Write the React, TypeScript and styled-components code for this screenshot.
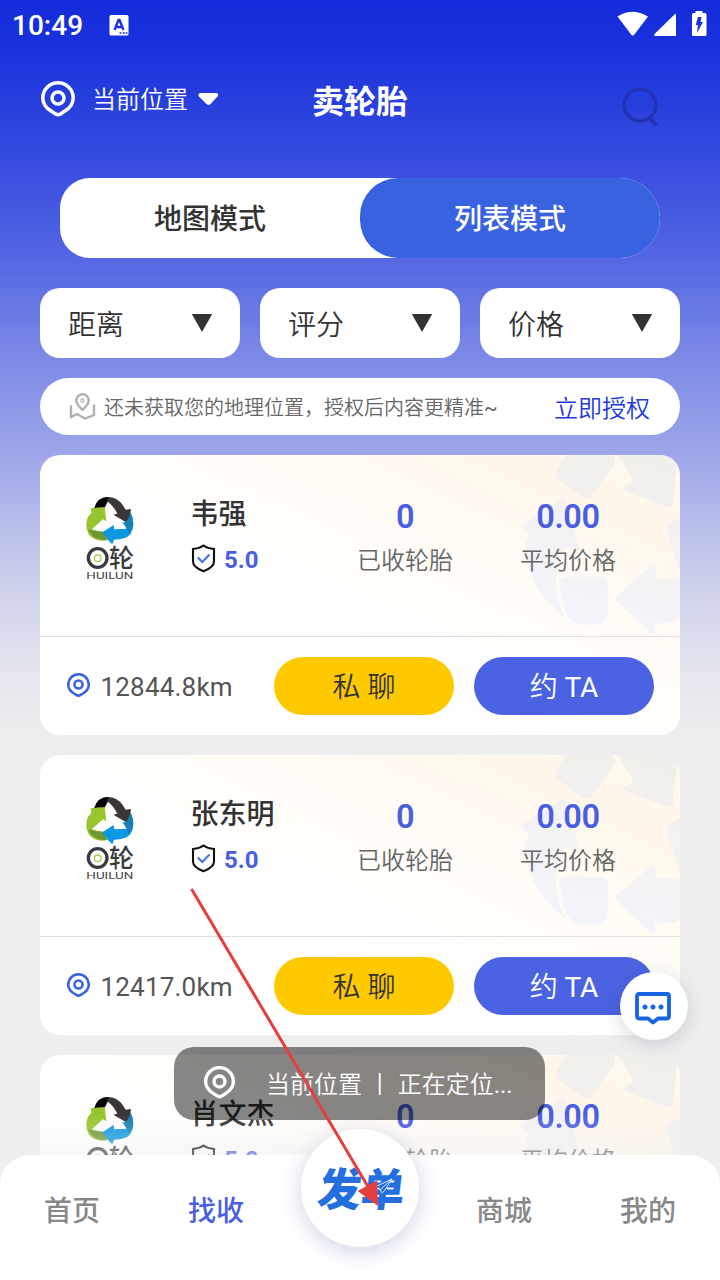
import React from "react";
import styled, { createGlobalStyle } from "styled-components";

const BLUE = "#495fe0";

const GlobalStyle = createGlobalStyle`
  * { box-sizing: border-box; }
  body {
    margin: 0;
    font-family: Roboto, "Noto Sans CJK SC", sans-serif;
    color: #333;
  }
`;

const Screen = styled.div`
  position: relative;
  width: 720px;
  height: 1280px;
  overflow: hidden;
  background: linear-gradient(
    180deg,
    #142bdb 0,
    #1a32dc 50px,
    #2c43de 120px,
    #384de0 165px,
    #5164e2 250px,
    #7584e5 340px,
    #a0a8e9 460px,
    #cfd2ec 590px,
    #e4e5ee 670px,
    #eee 740px
  );
`;

const Latin = styled.span`
  font-weight: 400;
`;

const StatusBar = styled.div`
  display: flex;
  align-items: center;
  height: 50px;
  padding: 0 13px 0 12px;
  color: #fff;
`;

const Clock = styled.span`
  width: 97px;
  padding-top: 1px;
  font-size: 28px;
  font-weight: 500;
  line-height: 50px;
`;

const StatusIcons = styled.div`
  display: flex;
  align-items: center;
  margin-left: auto;
`;

const Header = styled.header`
  display: grid;
  grid-template-columns: 1fr auto 1fr;
  align-items: center;
  height: 98px;
  padding: 0 41px;
  color: #fff;
`;

const Place = styled.div`
  display: flex;
  align-items: center;
  font-size: 24px;
  font-weight: 350;
  line-height: 36px;
  svg { flex: none; }
`;

const PlaceName = styled.span`
  margin: 1px 10px 0 17px;
`;

const Title = styled.h1`
  margin: 0;
  padding-top: 5px;
  font-size: 32px;
  font-weight: 700;
  line-height: 46px;
`;

const SearchButton = styled.div`
  justify-self: end;
  display: flex;
  padding-top: 14px;
  margin-right: 20px;
`;

const ModeTabs = styled.div`
  display: flex;
  height: 80px;
  margin: 30px 60px 0;
  border-radius: 30px 40px 40px 30px;
  background: #fff;
`;

const ModeTab = styled.div<{ $active?: boolean }>`
  flex: 1;
  padding-top: 2px;
  border-radius: 38px 40px 40px 38px;
  background: ${(p) => (p.$active ? "#3862e0" : "transparent")};
  color: ${(p) => (p.$active ? "#fff" : "#333")};
  font-size: 28px;
  font-weight: 500;
  line-height: 80px;
  text-align: center;
`;

const Filters = styled.div`
  display: flex;
  gap: 20px;
  margin: 30px 40px 20px;
`;

const Filter = styled.div`
  flex: 1;
  display: flex;
  align-items: center;
  justify-content: space-between;
  height: 70px;
  padding: 0 27px 0 28px;
  border-radius: 20px;
  background: #fff;
  font-size: 28px;
  font-weight: 350;
`;

const Notice = styled.div`
  display: flex;
  align-items: center;
  height: 57px;
  margin: 0 40px 20px;
  padding: 0 30px 0 29px;
  border-radius: 29px;
  background: #fff;
  font-weight: 350;
`;

const NoticeText = styled.span`
  margin: -1px 0 0 8px;
  font-size: 20px;
  color: #666;
`;

const NoticeLink = styled.a`
  margin-left: auto;
  font-size: 24px;
  color: #2339dc;
`;

const CardList = styled.div`
  display: flex;
  flex-direction: column;
  gap: 20px;
  padding: 0 40px;
`;

const Card = styled.article`
  position: relative;
  height: 280px;
  border-radius: 20px;
  overflow: hidden;
  background: linear-gradient(205deg, #fffaf2 0%, #fff6ea 14%, #fffaf3 28%, #fffdf9 42%, #fefefd 54%, #fff 64%);
`;

const Watermark = styled.svg`
  position: absolute;
  top: 0;
  right: 0;
`;

const CardTop = styled.div`
  position: relative;
  display: flex;
  height: 182px;
  padding-left: 46px;
  border-bottom: 1px solid #dfdfdf;
`;

const LogoBox = styled.div`
  width: 104.5px;
  padding-top: 41px;
`;

const Person = styled.div`
  width: 133px;
  padding-top: 40px;
`;

const Name = styled.div`
  font-size: 28px;
  font-weight: 500;
  line-height: 40px;
  white-space: nowrap;
`;

const Rating = styled.div`
  display: flex;
  align-items: center;
  gap: 8px;
  height: 30px;
  margin-top: 8px;
  padding-left: 0.5px;
  color: ${BLUE};
  font-size: 24px;
  font-weight: 700;
  span { padding-top: 3px; }
`;

const Stat = styled.div`
  width: 163px;
  padding-top: 43px;
  text-align: center;
`;

const StatValue = styled.div`
  color: ${BLUE};
  font-size: 32.5px;
  font-weight: 600;
  line-height: 38px;
  letter-spacing: -0.4px;
`;

const StatLabel = styled.div`
  margin-top: 7px;
  color: #666;
  font-size: 24px;
  font-weight: 350;
  line-height: 36px;
`;

const CardBottom = styled.div`
  position: relative;
  display: flex;
  align-items: center;
  gap: 20px;
  height: 98px;
  padding: 0 26px;
`;

const Distance = styled.div`
  flex: 1;
  display: flex;
  align-items: center;
  gap: 11px;
  padding: 1px 0 0 0.5px;
  color: #555;
  font-size: 26px;
  letter-spacing: 0.2px;
  svg { margin-top: -3px; }
`;

const ActionButton = styled.div<{ $primary?: boolean }>`
  width: 180px;
  height: 58px;
  padding-top: 2px;
  border-radius: 29px;
  background: ${(p) => (p.$primary ? "#4b63e2" : "#ffc900")};
  color: ${(p) => (p.$primary ? "#fff" : "#333")};
  font-size: 28px;
  font-weight: 350;
  line-height: 58px;
  text-align: center;
`;

const ChatBubble = styled.div`
  position: absolute;
  right: 32px;
  top: 972px;
  display: grid;
  place-items: center;
  width: 68px;
  height: 68px;
  padding: 3px 2px 0 0;
  border-radius: 50%;
  background: #fff;
  box-shadow: 0 4px 18px rgba(40, 50, 90, 0.18);
`;

const NavBar = styled.nav`
  position: absolute;
  left: 0;
  right: 0;
  bottom: 0;
  display: grid;
  grid-template-columns: repeat(5, 1fr);
  height: 125px;
  border-radius: 30px 30px 0 0;
  background: #fff;
`;

const NavFade = styled.div`
  position: absolute;
  left: 0;
  right: 0;
  bottom: 95px;
  height: 70px;
  background: linear-gradient(180deg, rgba(238, 238, 238, 0), rgba(238, 238, 238, 0.75));
`;

const NavItem = styled.div<{ $active?: boolean }>`
  padding-top: 36px;
  color: ${(p) => (p.$active ? BLUE : "#888")};
  font-size: 28px;
  font-weight: 500;
  line-height: 42px;
  text-align: center;
`;

const PostButton = styled.div`
  justify-self: center;
  width: 118px;
  height: 118px;
  margin-top: -26px;
  border-radius: 50%;
  background: #fff;
  box-shadow: 0 5px 22px rgba(60, 75, 150, 0.24);
`;

const Toast = styled.div`
  position: absolute;
  left: 174px;
  top: 1047px;
  display: flex;
  align-items: center;
  width: 371px;
  height: 73px;
  padding: 0 0 2px 30px;
  border-radius: 20px;
  background: rgba(0, 0, 0, 0.47);
  color: #fff;
  font-size: 24px;
  font-weight: 350;
  white-space: pre;
`;

const ToastText = styled.span`
  margin-left: 31px;
`;

const Pointer = styled.svg`
  position: absolute;
  left: 180px;
  top: 880px;
`;

function PinIcon({ width, color, stroke = 3.5 }: { width: number; color: string; stroke?: number }) {
  return (
    <svg width={width} height={(width * 36) / 34} viewBox="0 0 34 36" fill="none" stroke={color} strokeWidth={stroke}>
      <path
        strokeLinejoin="round"
        d="M17 33.7C15 33.7 13 31.8 10.4 30.3C5.4 27.3 1.8 23.2 1.8 17A15.2 15.2 0 0 1 32.2 17C32.2 23.2 28.6 27.3 23.6 30.3C21 31.8 19 33.7 17 33.7Z"
      />
      <circle cx="17" cy="17" r="6" />
    </svg>
  );
}

function CompanyLogo() {
  return (
    <svg width="48" height="84" viewBox="78 45 144 252">
      <path d="M103 81Q112 48 142 48Q170 47 188 72L197 86L213 84L206 128L160 101L172 98Q160 74 144 62L132 84Z" fill="#3b3535" />
      <path d="M103 81Q112 49 146 48L131 84L118 78Z" fill="#050505" />
      <path d="M92 82L134 78L139 121L129 115L96 144Q111 151 128 152L139 178Q103 183 86 160Q72 132 85 106L94 96Z" fill="#98c52d" />
      <path d="M84 145Q106 153 130 152L142 177Q100 181 84 145Z" fill="#6f9634" />
      <path d="M127 154L161 132L163 145L203 143Q198 131 184 124Q205 130 211 94Q230 131 211 160Q197 176 162 176L157 190L144 178Z" fill="#0c98e0" />
      <path d="M190 127Q207 122 212 94Q228 133 206 158Q202 146 190 127Z" fill="#197eb4" />
      <circle cx="113" cy="231" r="28" fill="none" stroke="#393c3e" strokeWidth="10" />
      <circle cx="113" cy="232" r="10" fill="none" stroke="#a8d04b" strokeWidth="4" />
      <text x="147" y="258" fontSize="75" fontWeight="500" fill="#393c3e">轮</text>
      <text x="79" y="293" fontSize="25" fill="#444" textLength="141" lengthAdjust="spacingAndGlyphs">HUILUN</text>
    </svg>
  );
}

function CardWatermark() {
  return (
    <Watermark width="220" height="280" viewBox="0 15 660 840" fill="url(#tyre-mark)">
      <defs>
        <linearGradient id="tyre-mark" gradientUnits="userSpaceOnUse" x1="500" y1="15" x2="350" y2="520">
          <stop offset="0" stopColor="#f1efeb" />
          <stop offset="0.5" stopColor="#f3f2f3" />
          <stop offset="1" stopColor="#f3f4fa" />
        </linearGradient>
      </defs>
      <path d="M320 15H455Q470 27 464 39L398 135Q386 151 370 145L300 93Q283 80 289 65Q300 38 320 15Z" />
      <path d="M473 15H640Q652 30 650 55L638 165Q636 176 624 171L496 124Q488 119 494 111L520 97Q513 75 473 15Z" />
      <path d="M303 149Q315 144 319 158L356 292Q359 305 349 301L318 291Q287 345 288 400Q290 460 318 507Q255 460 222 395Q195 340 196 300Q197 275 208 248L188 236Q180 229 188 223Z" />
      <path d="M315 380H425Q443 380 443 398V488Q440 524 402 524H370Q335 521 325 500Q300 450 300 395Q302 380 315 380Z" />
      <path d="M573 347Q587 340 587 353V387H660V507Q643 520 620 520H585V540Q583 555 573 550L468 450Q463 443 470 437Z" />
      <path d="M660 205L633 216Q616 225 622 250L660 370Z" />
    </Watermark>
  );
}

function Triangle() {
  return (
    <svg width="22" height="20" viewBox="0 0 22 20">
      <path d="M0.8 1H21.2L11 19Z" fill="#333" />
    </svg>
  );
}

const people = [
  { name: "韦强", distance: "12844.8km" },
  { name: "张东明", distance: "12417.0km" },
  { name: "肖文杰" },
];

function PersonCard({ name, distance }: { name: string; distance?: string }) {
  return (
    <Card>
      <CardWatermark />
      <CardTop>
        <LogoBox>
          <CompanyLogo />
        </LogoBox>
        <Person>
          <Name>{name}</Name>
          <Rating>
            <svg width="25" height="29" viewBox="0 0 25 29" fill="none" strokeWidth="2.1">
              <path d="M12.5 1.5Q16.5 4.6 23 5V17.5C23 22 18.5 25 12.5 27.3C6.5 25 2 22 2 17.5V5Q8.5 4.6 12.5 1.5Z" stroke="#111" />
              <path d="M6.8 13.5L11.3 18L18.5 10.5" stroke="#4275e8" />
            </svg>
            <span>5.0</span>
          </Rating>
        </Person>
        <Stat>
          <StatValue>0</StatValue>
          <StatLabel>已收轮胎</StatLabel>
        </Stat>
        <Stat>
          <StatValue>0.00</StatValue>
          <StatLabel>平均价格</StatLabel>
        </Stat>
      </CardTop>
      {distance && (
        <CardBottom>
          <Distance>
            <PinIcon width={23} color="#3862e0" stroke={3.8} />
            {distance}
          </Distance>
          <ActionButton>私 聊</ActionButton>
          <ActionButton $primary>
            约 <Latin>TA</Latin>
          </ActionButton>
        </CardBottom>
      )}
    </Card>
  );
}

export default function App() {
  return (
    <Screen>
      <GlobalStyle />
      <StatusBar>
        <Clock>10:49</Clock>
        <svg width="20" height="21" viewBox="0 0 19 21">
          <rect width="19" height="20.5" rx="1.5" fill="#fff" />
          <path d="M5 15L9 5H10L14 15M6.5 12H12.5" fill="none" stroke="#1930dc" strokeWidth="2.3" />
          <path d="M10 18H12M13.3 18H15.3M16.2 18H18" stroke="#1930dc" strokeWidth="1.5" />
        </svg>
        <StatusIcons>
          <svg width="90" height="28" viewBox="0 0 90 28" fill="#fff">
            <path d="M0.5 5.5Q15 -4 31 5.5L17 24Q15.8 25 14.5 24Z" />
            <path d="M59 3V25H38Q36.5 24.5 37.5 23L58 3Z" />
            <path d="M78.5 0H85.5V2H88Q89.5 2 89.5 4V24Q89.5 25 88 25H76.5Q75 25 75 24V4Q75 2 76.5 2H78.5Z" />
            <path d="M81 6H84.5L83.5 11H86L80 22L81 14H78.7Z" fill="#1930dc" />
          </svg>
        </StatusIcons>
      </StatusBar>
      <Header>
        <Place>
          <PinIcon width={34} color="#fff" />
          <PlaceName>当前位置</PlaceName>
          <svg width="21" height="14" viewBox="0 0 21 14">
            <path d="M2 1H19Q21 2.5 19.5 4.5L12.5 12Q10.5 13.8 8.5 12L1 4.5Q-0.5 2.5 2 1Z" fill="#fff" />
          </svg>
        </Place>
        <Title>卖轮胎</Title>
        <SearchButton>
          <svg width="37" height="39" viewBox="0 0 37 39" fill="none" stroke="#2232b4" strokeWidth="3.4">
            <circle cx="18" cy="18" r="16" />
            <path d="M29 32.5L33 36.5" strokeWidth="4.2" strokeLinecap="round" />
          </svg>
        </SearchButton>
      </Header>
      <ModeTabs>
        <ModeTab>地图模式</ModeTab>
        <ModeTab $active>列表模式</ModeTab>
      </ModeTabs>
      <Filters>
        {["距离", "评分", "价格"].map((label) => (
          <Filter key={label}>
            {label}
            <Triangle />
          </Filter>
        ))}
      </Filters>
      <Notice>
        <svg width="27" height="27" viewBox="0 0 27 27" fill="none" stroke="#b0b0b0" strokeWidth="2.4">
          <path d="M13.5 17C10 13.5 7.3 11 7.3 7.5A6.2 6.2 0 0 1 19.7 7.5C19.7 11 17 13.5 13.5 17Z" />
          <circle cx="13.5" cy="7.5" r="1.6" strokeWidth="1.2" />
          <path d="M2 12.5V24L8 21L16 25.5L25 22V11.5M2 20" />
        </svg>
        <NoticeText>
          还未获取您的地理位置，授权后内容更精准<Latin>~</Latin>
        </NoticeText>
        <NoticeLink>立即授权</NoticeLink>
      </Notice>
      <CardList>
        {people.map((person) => (
          <PersonCard key={person.name} {...person} />
        ))}
      </CardList>
      <NavFade />
      <ChatBubble>
        <svg width="38" height="34" viewBox="0 0 38 34" fill="none" stroke="#1765e0" strokeWidth="3.8" strokeLinejoin="round">
          <path d="M5 3H33Q35 3 35 5V25Q35 27.5 33 27.5H24L19 31.5L14 27.5H5Q3 27.5 3 25V5Q3 3 5 3Z" />
          <g fill="#1765e0" stroke="none">
            <circle cx="11" cy="16" r="2.5" />
            <circle cx="19" cy="16" r="2.5" />
            <circle cx="27" cy="16" r="2.5" />
          </g>
        </svg>
      </ChatBubble>
      <Toast>
        <PinIcon width={31} color="#fff" stroke={3.7} />
        <ToastText>
          当前位置 丨 正在定位<Latin>...</Latin>
        </ToastText>
      </Toast>
      <NavBar>
        <NavItem>首页</NavItem>
        <NavItem $active>找收</NavItem>
        <PostButton>
          <svg width="118" height="118" viewBox="0 0 118 118">
            <text
              x="17"
              y="77"
              transform="translate(7.5 0) skewX(-7)"
              fontFamily="Noto Sans CJK SC, sans-serif"
              fontSize="45"
              fontWeight="900"
              fill="#236fe0"
              textLength="87"
              lengthAdjust="spacingAndGlyphs"
            >
              发单
            </text>
            <path d="M91 50L74 58L79 60L81 64L84 61Z" fill="#236fe0" stroke="#fff" strokeWidth="0.8" />
            <path d="M91 50L79 61" stroke="#fff" strokeWidth="0.8" />
          </svg>
        </PostButton>
        <NavItem>商城</NavItem>
        <NavItem>我的</NavItem>
      </NavBar>
      <Pointer width="210" height="335" viewBox="0 0 210 335">
        <path d="M11.5 9L190 310" stroke="#e53e3e" strokeWidth="3" />
        <path d="M198 326L177.5 311L197 300.5Z" fill="#e53e3e" />
      </Pointer>
    </Screen>
  );
}
